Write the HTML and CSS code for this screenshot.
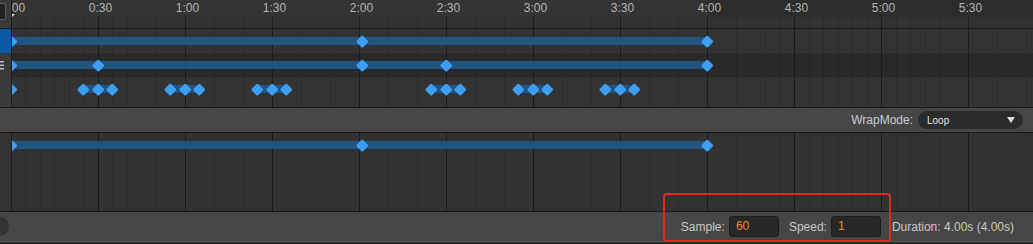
FILE: index.html
```html
<!DOCTYPE html>
<html>
<head>
<meta charset="utf-8">
<title>Animation timeline</title>
<link rel="stylesheet" href="styles.css">
</head>
<body>
<div class="editor">
  <div class="lane header">
    <div class="side side-head"><div class="corner-btn"></div></div>
    <div class="track ruler">
      <div class="ruler-top">
        <div class="labels">
          <span>0:00</span><span>0:30</span><span>1:00</span><span>1:30</span><span>2:00</span><span>2:30</span><span>3:00</span><span>3:30</span><span>4:00</span><span>4:30</span><span>5:00</span><span>5:30</span>
        </div>
      </div>
      <div class="ruler-ticks grid"></div>
      <div class="playhead"></div>
    </div>
  </div>
  <div class="sep"></div>

  <div class="lane row">
    <div class="side side-sel"></div>
    <div class="track grid">
      <div class="bar" style="left:0;width:695px"></div>
      <div class="key" style="left:-0.5px"></div>
      <div class="key" style="left:350px"></div>
      <div class="key" style="left:695px"></div>
    </div>
  </div>

  <div class="lane row row-dark">
    <div class="side">
      <svg class="menu-icon" width="4" height="9" viewBox="0 0 4 9"><rect x="0" y="0" width="4" height="1.5"/><rect x="0" y="3.5" width="4" height="1.5"/><rect x="0" y="7" width="4" height="1.5"/></svg>
    </div>
    <div class="track grid">
      <div class="bar" style="left:0;width:695px"></div>
      <div class="key" style="left:-0.5px"></div>
      <div class="key" style="left:86px"></div>
      <div class="key" style="left:350px"></div>
      <div class="key" style="left:434px"></div>
      <div class="key" style="left:695px"></div>
    </div>
  </div>

  <div class="lane row row-tall">
    <div class="side"></div>
    <div class="track grid">
      <div class="key" style="left:-0.5px"></div>
      <div class="bar" style="left:71px;width:29.5px"></div>
      <div class="key" style="left:71px"></div>
      <div class="key" style="left:86px"></div>
      <div class="key" style="left:100.5px"></div>
      <div class="bar" style="left:158px;width:29px"></div>
      <div class="key" style="left:158px"></div>
      <div class="key" style="left:173px"></div>
      <div class="key" style="left:187px"></div>
      <div class="bar" style="left:245px;width:29px"></div>
      <div class="key" style="left:245px"></div>
      <div class="key" style="left:260px"></div>
      <div class="key" style="left:274px"></div>
      <div class="bar" style="left:419px;width:29px"></div>
      <div class="key" style="left:419px"></div>
      <div class="key" style="left:434px"></div>
      <div class="key" style="left:448px"></div>
      <div class="bar" style="left:506px;width:29px"></div>
      <div class="key" style="left:506px"></div>
      <div class="key" style="left:521px"></div>
      <div class="key" style="left:535px"></div>
      <div class="bar" style="left:593px;width:29px"></div>
      <div class="key" style="left:593px"></div>
      <div class="key" style="left:608px"></div>
      <div class="key" style="left:622px"></div>
    </div>
  </div>
  <div class="sep"></div>

  <div class="band">
    <span class="wrap-label">WrapMode:</span>
    <div class="dropdown"><span>Loop</span><span class="caret"></span></div>
  </div>
  <div class="sep"></div>

  <div class="lane lower">
    <div class="side"></div>
    <div class="track grid">
      <div class="bar" style="left:0;width:695px"></div>
      <div class="key" style="left:-0.5px"></div>
      <div class="key" style="left:350px"></div>
      <div class="key" style="left:695px"></div>
    </div>
  </div>
  <div class="sep"></div>

  <div class="status">
    <div class="knob"></div>
    <div class="spacer"></div>
    <span class="field-label">Sample:</span>
    <div class="field">60</div>
    <span class="field-label">Speed:</span>
    <div class="field">1</div>
    <span class="duration">Duration: 4.00s (4.00s)</span>
  </div>
  <div class="status-edge"></div>
  <div class="floor"></div>

  <div class="highlight"></div>
</div>
</body>
</html>
```

FILE: styles.css
```css
* { box-sizing: border-box; }
html, body { margin: 0; padding: 0; }
body {
  width: 1033px;
  height: 244px;
  overflow: hidden;
  background: #2a2a2a;
  font-family: "Liberation Sans", Arial, sans-serif;
  font-size: 12px;
  color: #c8c8c8;
}
.editor {
  position: relative;
  width: 1033px;
  height: 244px;
  display: flex;
  flex-direction: column;
}
.lane { display: flex; flex: none; }
.side {
  flex: none;
  width: 12px;
  border-right: 1px solid #1b1b1b;
  background: #3a3a3a;
  overflow: hidden;
  display: flex;
  align-items: center;
}
.track {
  flex: 1;
  position: relative;
  overflow: hidden;
}
.grid {
  background-image:
    repeating-linear-gradient(90deg, transparent 0 86px, #1b1b1b 86px 87px),
    repeating-linear-gradient(90deg, transparent 0 13.5px, rgba(0,0,0,0.13) 13.5px 14.5px);
}
.sep { flex: none; height: 1px; background: #1c1c1c; }

/* header / ruler */
.header { height: 28px; }
.side-head { align-items: flex-start; }
.corner-btn {
  flex: none;
  width: 16px;
  height: 17px;
  margin: 3px 0 0 -10px;
  border: 1px solid #5e5e5e;
  border-radius: 2px;
  background: #222;
}
.ruler { display: flex; flex-direction: column; }
.ruler-top {
  height: 17px;
  overflow: hidden;
  background: linear-gradient(90deg, #343434 0 696px, #2c2c2c 696px);
}
.labels { display: flex; margin-left: -42px; }
.labels span {
  flex: 0 0 87px;
  text-align: center;
  line-height: 16px;
  font-size: 12px;
  color: #b4b4b4;
}
.ruler-ticks { height: 11px; background-color: #323232; }
.playhead {
  position: absolute;
  left: 0;
  top: 14px;
  width: 0;
  height: 0;
  border-top: 3px solid #dcdcdc;
  border-right: 3px solid transparent;
}

/* rows */
.row { height: 24px; }
.row .track { background-color: #333333; }
.row-dark .track { background-color: #292929; }
.row-tall { height: 30px; }
.side-sel { background: #0b5aa6; }
.menu-icon { fill: #bdbdbd; flex: none; }

.bar {
  position: absolute;
  top: 8px;
  height: 8px;
  background: #215383;
}
.key {
  position: absolute;
  top: 7.75px;
  width: 8.5px;
  height: 8.5px;
  margin-left: -4.25px;
  background: #3d9ff3;
  border-radius: 1.5px;
  transform: rotate(45deg);
}

/* wrap mode band */
.band {
  flex: none;
  height: 24px;
  background: #464646;
  display: flex;
  align-items: center;
  justify-content: flex-end;
  gap: 5px;
  padding-right: 10px;
}
.wrap-label { color: #c6cbd0; font-size: 12px; }
.dropdown {
  width: 105px;
  height: 18px;
  border-radius: 9px;
  background: #2b2b2b;
  display: flex;
  align-items: center;
  justify-content: space-between;
  padding: 0 8px 0 9px;
  color: #e6e6e6;
  font-size: 10px;
}
.caret {
  width: 0;
  height: 0;
  border-left: 4px solid transparent;
  border-right: 4px solid transparent;
  border-top: 6px solid #dcdcdc;
}

/* lower curve area */
.lower { height: 78px; }
.lower .side { background: #333333; }
.lower .track { background-color: #323232; }

/* status bar */
.status {
  flex: none;
  height: 29px;
  background: #464646;
  display: flex;
  align-items: center;
  padding-right: 19px;
}
.knob {
  flex: none;
  width: 19px;
  height: 19px;
  border-radius: 50%;
  background: #333;
  margin-left: -10px;
}
.spacer { flex: 1; }
.field-label { margin-right: 4px; color: #c8c8c8; }
.field {
  flex: none;
  width: 50px;
  height: 21px;
  background: #272727;
  border: 1px solid #1d1d1d;
  border-radius: 3px;
  padding-left: 6px;
  line-height: 19px;
  color: #f58a1e;
  margin-right: 10px;
}
.duration { margin-left: 1px; color: #c8c8c8; }
.status-edge { flex: none; height: 1px; background: #5a5a5a; }
.floor { flex: none; height: 2px; background: #2a2a2a; }

.highlight {
  position: absolute;
  left: 663px;
  top: 193px;
  width: 228px;
  height: 49px;
  border: 2px solid #e8251f;
  border-radius: 4px;
}
```
